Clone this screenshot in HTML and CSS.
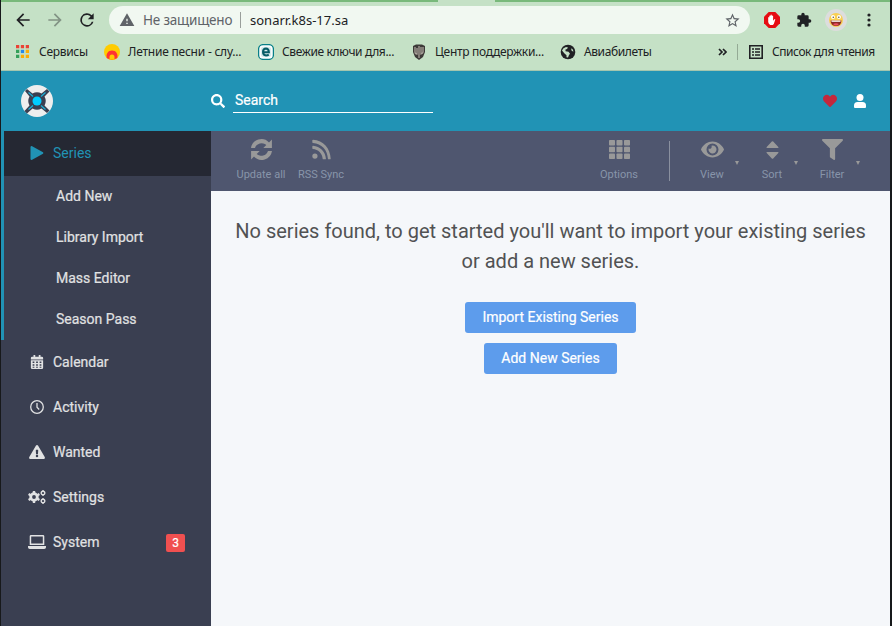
FILE: index.html
```html
<!DOCTYPE html>
<html lang="ru">
<head>
<meta charset="utf-8">
<title>Sonarr</title>
<link rel="stylesheet" href="styles.css">
</head>
<body>
<div class="window">
  <div class="tab-strip"><span class="active-tab"></span></div>
  <div class="browser-bar">
    <svg class="nav-icon" viewBox="0 0 24 24"><path d="M20 11H7.8l5.6-5.6L12 4l-8 8 8 8 1.4-1.4L7.8 13H20z"/></svg>
    <svg class="nav-icon forward" viewBox="0 0 24 24"><path d="M12 4l-1.4 1.4 5.6 5.6H4v2h12.2l-5.6 5.6L12 20l8-8z"/></svg>
    <svg class="nav-icon" viewBox="0 0 24 24"><path d="M17.65 6.35A8 8 0 1 0 19.73 14h-2.08A6 6 0 1 1 12 6c1.66 0 3.14.69 4.22 1.78L13 11h7V4z"/></svg>
    <div class="omnibox">
      <svg class="insecure" viewBox="0 0 24 24"><path d="M1 21h22L12 2zm12-3h-2v-2h2zm0-4h-2v-4h2z"/></svg>
      <span class="insecure-label">Не защищено</span>
      <span class="url-divider"></span>
      <span class="url">sonarr.k8s-17.sa</span>
      <svg class="star" viewBox="0 0 24 24"><path d="M22 9.24l-7.19-.62L12 2 9.19 8.63 2 9.24l5.46 4.73L5.82 21 12 17.27 18.18 21l-1.63-7.03zM12 15.4l-3.76 2.27 1-4.28-3.32-2.88 4.38-.38L12 6.1l1.71 4.04 4.38.38-3.32 2.88 1 4.28z"/></svg>
    </div>
    <svg class="adblock" viewBox="0 0 16 16"><path fill="#e60c12" d="M4.7 0h6.6L16 4.7v6.6L11.3 16H4.7L0 11.3V4.7z"/><path fill="#fff" d="M4.2 8.2V5.4q.6-.9 1.1 0V4q.6-.9 1.2 0V3q.7-.8 1.3 0v1q.7-.8 1.3 0v4.7l1.3-1.5q1-.3.9.4L9.8 11.9 8.8 13H6.2Q4.5 12 4.2 10z"/></svg>
    <svg class="puzzle" viewBox="0 0 24 24"><path d="M20.5 11H19V7a2 2 0 0 0-2-2h-4V3.500a2.500 2.500 0 0 0-5 0V5H4a2 2 0 0 0-2 2v3.800h1.500a2.700 2.700 0 0 1 0 5.400H2V20a2 2 0 0 0 2 2h3.800v-1.500a2.700 2.700 0 0 1 5.400 0V22H17a2 2 0 0 0 2-2v-4h1.500a2.500 2.500 0 0 0 0-5z"/></svg>
    <svg class="avatar" viewBox="0 0 22 22"><circle cx="11" cy="11" r="11" fill="#ddd"/><circle cx="11" cy="11" r="7" fill="#f9cf52"/><circle cx="8" cy="8" r="2" fill="#fff"/><circle cx="14" cy="8" r="2" fill="#fff"/><circle cx="8.300" cy="8.200" r=".8" fill="#654"/><circle cx="13.800" cy="8.200" r=".8" fill="#654"/><path fill="#8e2828" d="M5.500 11.500h11Q16 17 11 17t-5.500-5.500z"/><path fill="#fff" d="M6.500 11.500h9v1.300h-9z"/><path fill="#ed5262" d="M8 15q3-1.500 6 0-3 3-6 0z"/></svg>
    <svg class="dots" viewBox="0 0 4 14"><circle cx="2" cy="2" r="1.600"/><circle cx="2" cy="7" r="1.600"/><circle cx="2" cy="12" r="1.600"/></svg>
  </div>
  <div class="bookmarks">
    <svg class="bm-apps" viewBox="0 0 14 14"><path fill="#ea4335" d="M0 0h3.500v3.500H0zM5.200 0h3.500v3.500H5.200zM10.500 0H14v3.500h-3.500z"/><path fill="#34a05a" d="M0 5.200h3.500v3.500H0zM0 10.500h3.500V14H0z"/><path fill="#2488ee" d="M5.200 5.200h3.500v3.500H5.200z"/><path fill="#fbad08" d="M10.500 5.200H14v3.500h-3.500zM5.200 10.500h3.500V14H5.200zM10.500 10.500H14V14h-3.500z"/></svg>
    <span class="bm-text t-services">Сервисы</span>
    <svg class="bm-icon" viewBox="0 0 16 16"><circle cx="8" cy="8" r="8" fill="#fc0"/><path fill="#f33" d="M3 14.200a5.500 5.500 0 1 1 10 0L8 16z"/><path fill="#fc0" d="M5.500 15.700V13a2.500 2.500 0 0 1 5 0v2.700z"/></svg>
    <span class="bm-text t-songs">Летние песни - слу...</span>
    <svg class="bm-icon" viewBox="0 0 16 16"><rect x=".6" y=".6" width="14.800" height="14.800" rx="4.500" fill="#fff" stroke="#087f88" stroke-width="1.300"/><rect x="2.800" y="2.800" width="10.400" height="10.400" rx="3" fill="#d7ebed"/><path fill="none" stroke="#075c66" stroke-width="2" d="M5 8.200h5.900Q10.700 4.600 8 4.600 5 4.800 5 8t3 3.400q1.500 0 2.800-.8"/></svg>
    <span class="bm-text t-keys">Свежие ключи для...</span>
    <svg class="bm-icon" viewBox="0 0 16 16"><path fill="#3d3a38" d="M2 2l3-1.500h6L14 2v6l-2 5-4 3-4-3-2-5z"/><path fill="none" stroke="#aaa29b" stroke-width="1.300" d="M4 3v5q0 2 2 2V4m4-1v7q2.500-.8 2-3V3M8 2v12"/></svg>
    <span class="bm-text t-support">Центр поддержки...</span>
    <svg class="bm-icon" viewBox="0 0 16 16"><circle cx="8" cy="8" r="7.300" fill="#202124"/><path fill="#c5e1c6" d="M2 6.500q1-3 4-3.500l2 .5L7 5 5.500 5.500v1.800l3 .5 1.500 2-1 1.200-1 2.500-1.500-.3v-2L4.500 9.500zM11 4.500l1.500.5 1 2.500-1.700-.6z"/></svg>
    <span class="bm-text t-avia">Авиабилеты</span>
    <svg class="overflow" viewBox="0 0 9 8"><path fill="none" stroke="#202124" stroke-width="1.700" d="M1 1l3 3-3 3m4-6l3 3-3 3"/></svg>
    <span class="bm-divider"></span>
    <svg class="reading" viewBox="0 0 14 14"><path fill="none" stroke="#202124" stroke-width="1.600" d="M.8.8h12.400v12.400H.8zM3 4h2m1 0h5M3 7h2m1 0h5M3 10h2m1 0h5"/></svg>
    <span class="bm-text t-reading">Список для чтения</span>
  </div>
  <header class="app-header">
    <svg class="logo" viewBox="0 0 32 32"><circle cx="16" cy="16" r="16" fill="#eee"/><path fill="#3a3f51" d="M4 6l2-2 5.500 4.500Q16 6 20.500 8.500L26 4l2.500 2.500-5 5Q26 16 23.500 20.500l5 5L26 28l-5.500-4.500Q16 26 11.500 23.500L6 28.500 3.500 26l5-5.500Q6 16 8.500 11.500z"/><path stroke="#1bafd7" stroke-width="1.200" d="M7.500 7.500l4.500 4M24.500 7.500l-4.500 4M7.500 24.500l4.500-4M24.500 24.500l-4.500-4"/><circle cx="16" cy="16" r="4.500" fill="#0cf"/></svg>
    <svg class="search-icon" viewBox="0 0 512 512"><path d="M505 442.700L405.300 343c-4.500-4.500-10.600-7-17-7H372c27.600-35.300 44-79.700 44-128C416 93.100 322.900 0 208 0S0 93.100 0 208s93.100 208 208 208c48.300 0 92.700-16.400 128-44v16.300c0 6.400 2.500 12.500 7 17l99.700 99.700c9.400 9.400 24.600 9.400 33.900 0l28.300-28.300c9.400-9.400 9.400-24.600.1-34zM208 336a128 128 0 1 1 0-256 128 128 0 0 1 0 256z"/></svg>
    <input class="search" aria-label="Search" placeholder="Search">
    <svg class="heart" viewBox="0 0 512 512"><path d="M462 62c-55-46-136-38-186 14l-20 20-20-20C186 24 105 16 50 62c-63 54-66 150-10 208l193 200c13 13 33 13 46 0l193-200c56-58 53-154-10-208z"/></svg>
    <svg class="user" viewBox="0 0 12 14"><circle cx="6" cy="3.500" r="3.500"/><path d="M0 13v-1.500Q0 8 3.500 8h5Q12 8 12 11.500V13q0 1-1 1H1q-1 0-1-1z"/></svg>
  </header>
  <div class="app-body">
    <nav class="sidebar">
      <div class="active-group">
        <a class="nav-link current"><svg viewBox="0 0 14 14"><path d="M1.200 0Q0 0 0 1v12q0 1 1.200 1L12.500 7.800q.8-.8 0-1.600z" transform="translate(.5)"/></svg>Series</a>
        <a class="sub-link">Add New</a>
        <a class="sub-link">Library Import</a>
        <a class="sub-link">Mass Editor</a>
        <a class="sub-link">Season Pass</a>
      </div>
      <a class="nav-link"><svg viewBox="0 0 448 512"><path fill-rule="evenodd" d="M0 464a48 48 0 0 0 48 48h352a48 48 0 0 0 48-48V192H0zM64 240h64v56H64zm128 0h64v56h-64zm128 0h64v56h-64zM64 336h64v56H64zm128 0h64v56h-64zm128 0h64v56h-64zM64 430h64v34H64zm128 0h64v34h-64zm128 0h64v34h-64zM400 64h-48V0h-64v64H160V0H96v64H48a48 48 0 0 0-48 48v48h448v-48a48 48 0 0 0-48-48z"/></svg>Calendar</a>
      <a class="nav-link"><svg viewBox="0 0 14 14"><path fill="none" stroke="#e1e2e3" stroke-width="1.300" d="M7 .7a6.300 6.300 0 1 0 0 12.600A6.300 6.300 0 0 0 7 .7zM7 3v4.300L9.200 9.500"/></svg>Activity</a>
      <a class="nav-link"><svg viewBox="0 0 576 512"><path fill-rule="evenodd" d="M570 440c18 32-5 72-42 72H48c-37 0-60-40-42-72L246 24c19-32 65-32 84 0zM288 354a46 46 0 1 0 0 92 46 46 0 0 0 0-92zm-44-165l8 136q1 11 12 11h48q11 0 12-11l8-136q0-13-12-13h-64q-12 0-12 13z"/></svg>Wanted</a>
      <a class="nav-link"><svg viewBox="0 0 18 14"><path fill="none" stroke="#e1e2e3" stroke-width="2.800" d="M6 3.700a3.300 3.300 0 1 0 0 6.600 3.300 3.300 0 0 0 0-6.600z"/><path d="M4.800 1h2.400v2H4.800zm0 10h2.400v2H4.800zM0 5l1.200-2 2 1.300L2 6.200zM10 7.800l2 1.200-1.200 2-2-1.300zM10.800 3L12 5l-2 1.200-1.200-2zM2 7.800l1.200 2-2 1.200L0 9z"/><path fill="none" stroke="#e1e2e3" stroke-width="1.400" d="M15 1.200a1.800 1.800 0 1 0 0 3.600 1.800 1.800 0 0 0 0-3.600zm0 8a1.800 1.800 0 1 0 0 3.600 1.800 1.800 0 0 0 0-3.600z"/><path d="M14.400 0h1.200v1h-1.200zm0 5h1.200v1h-1.200zm0 3h1.200v1h-1.200zm0 5h1.200v1h-1.200z"/></svg>Settings</a>
      <a class="nav-link"><svg viewBox="0 0 18 14"><path fill-rule="evenodd" d="M3 0h12q1.300 0 1.300 1.300V10H1.700V1.300Q1.700 0 3 0zm.2 1.600v6.900h11.600V1.600zM0 11h18v1.200q0 1.800-1.800 1.800H1.800Q0 14 0 12.200z"/></svg>System<span class="badge">3</span></a>
    </nav>
    <main class="content">
      <div class="toolbar">
        <div class="tool update"><svg viewBox="0 0 21 21"><path d="M0 9A10.500 10.500 0 0 1 18 3.400L20.900.5V9h-8.600l3-3A7 7 0 0 0 4 9zM21 12A10.500 10.500 0 0 1 3 17.600L.1 20.500V12h8.600l-3 3A7 7 0 0 0 17 12z"/></svg><span>Update all</span></div>
        <div class="tool rss"><svg viewBox="0 0 448 512"><path d="M128 416a64 64 0 1 1-128 0 64 64 0 0 1 128 0zM0 180v48c0 9 7 16 15 16 127 8 229 110 237 237 0 8 7 15 16 15h48c9 0 17-8 16-17C323 311 185 173 17 164c-9-1-17 7-17 16zm0-148v48c0 9 7 16 15 16 209 8 357 176 365 385 0 8 7 15 16 15h36c9 0 16-8 16-17C439 229 267 25 17 16 8 16 0 23 0 32z"/></svg><span>RSS Sync</span></div>
        <div class="tool options"><svg viewBox="0 0 21 19"><g><rect width="6" height="5.500" rx=".8"/><rect x="7.500" width="6" height="5.500" rx=".8"/><rect x="15" width="6" height="5.500" rx=".8"/><rect y="6.800" width="6" height="5.500" rx=".8"/><rect x="7.500" y="6.800" width="6" height="5.500" rx=".8"/><rect x="15" y="6.800" width="6" height="5.500" rx=".8"/><rect y="13.500" width="6" height="5.500" rx=".8"/><rect x="7.500" y="13.500" width="6" height="5.500" rx=".8"/><rect x="15" y="13.500" width="6" height="5.500" rx=".8"/></g></svg><span>Options</span></div>
        <div class="separator"></div>
        <div class="tool view"><svg viewBox="0 0 576 400"><path fill-rule="evenodd" d="M572 185C518 79 410 0 288 0S58 79 4 185q-6 15 0 30c54 106 162 185 284 185s230-79 284-185q6-15 0-30zM288 350a150 150 0 1 1 0-300 150 150 0 0 1 0 300z"/><path d="M288 100q-14 0-27 4a50 50 0 0 1-69 69 100 100 0 1 0 96-73z"/></svg><span>View</span><i></i></div>
        <div class="tool sort"><svg viewBox="0 0 12 18"><path d="M.5 7Q-.5 7 .2 6.100L5.300.6Q6 0 6.700.6l5.100 5.500q.7.900-.3.900zM.5 11q-1 0-.3.900l5.100 5.500q.7.600 1.400 0l5.100-5.500q.7-.9-.3-.9z"/></svg><span>Sort</span><i></i></div>
        <div class="tool filter"><svg viewBox="0 0 512 512"><path d="M488 0H24C3 0-8 26 7 41l185 185v206q0 12 10 20l80 56c16 11 38 0 38-20V226L505 41c15-15 4-41-17-41z"/></svg><span>Filter</span><i></i></div>
      </div>
      <div class="empty">
        <p>No series found, to get started you'll want to import your existing series or add a new series.</p>
        <button>Import Existing Series</button>
        <button>Add New Series</button>
      </div>
    </main>
  </div>
</div>
</body>
</html>
```
FILE: styles.css
```css
* { box-sizing: border-box; }
body { margin: 0; background: #17191b; font-family: Roboto, sans-serif; font-size: 14px; }
svg { display: block; flex: none; }
.window { width: 889px; height: 626px; margin-left: 1px; overflow: hidden; display: flex; flex-direction: column; background: #c5e1c6; }
.tab-strip { height: 2px; flex: none; background: #79b97b; padding-left: 437px; }
.active-tab { display: block; width: 57px; height: 2px; background: #c5e1c6; }
.browser-bar { height: 36px; flex: none; display: flex; align-items: center; padding: 0 18px 0 12px; fill: #202124; font-family: "Noto Sans", sans-serif; }
.nav-icon { width: 20px; height: 20px; margin-right: 12px; }
.forward { opacity: .4; }
.omnibox { width: 641px; height: 28px; border-radius: 14px; background: #f1f8f1; display: flex; align-items: center; padding: 0 9px 0 10px; font-size: 13px; color: #202124; }
.insecure { width: 16px; height: 16px; fill: #5f6368; }
.insecure-label { width: 90px; margin-left: 8px; color: #5f6368; white-space: nowrap; font-size: 13.5px; letter-spacing: -.2px; }
.url-divider { width: 1px; height: 16px; margin: 0 9px 0 7px; background: #999e9b; }
.star { width: 17px; height: 17px; margin-left: auto; fill: #5f6368; }
.adblock { width: 16px; height: 16px; margin-left: 14px; }
.puzzle { width: 16px; height: 16px; margin-left: 16px; }
.avatar { width: 22px; height: 22px; margin-left: 13px; }
.dots { width: 4px; height: 14px; margin-left: 20px; }
.bookmarks { height: 33px; flex: none; display: flex; align-items: center; padding: 0 0 5px 15px; border-bottom: 1px solid #a4c5ae; font: 12px "Noto Sans", sans-serif; letter-spacing: -.3px; color: #202124; }
.bm-apps { width: 13px; height: 13px; }
.bm-text { white-space: nowrap; margin-left: 8px; }
.bm-icon { width: 16px; height: 16px; }
.t-services { width: 65px; margin-left: 10px; }
.t-songs { width: 130px; letter-spacing: -.22px; }
.t-keys { width: 129px; letter-spacing: -.36px; }
.t-support { width: 125px; }
.t-avia { width: 134px; letter-spacing: -.4px; }
.overflow { width: 9px; height: 8px; }
.bm-divider { width: 1px; height: 16px; margin: 0 11px 0 10px; background: #94aa95; }
.reading { width: 14px; height: 14px; }
.t-reading { margin-left: 9px; letter-spacing: -.45px; }
.app-header { height: 60px; flex: none; display: flex; align-items: center; padding: 0 24px 0 20px; background: #2193b5; fill: #fff; }
.logo { width: 32px; height: 32px; }
.search-icon { width: 14px; height: 14px; margin-left: 158px; }
.search { width: 200px; height: 24px; margin-left: 8px; padding: 0 0 2px 2px; border: 0; border-bottom: 1px solid #fff; background: none; outline: 0; font: 14px Roboto, sans-serif; color: #fff; -webkit-text-stroke: .2px; }
.search::placeholder { color: #fff; opacity: 1; }
.heart { width: 14px; height: 14px; margin-left: auto; fill: #c4273c; }
.user { width: 12px; height: 14px; margin-left: 17px; }
.app-body { flex: 1; display: flex; min-height: 0; }
.sidebar { width: 210px; background: #3a3f51; color: #e1e2e3; fill: #e1e2e3; -webkit-text-stroke: .2px; }
.active-group { border-left: 3px solid #2193b5; height: 209px; }
.nav-link { height: 45px; display: flex; align-items: center; padding: 0 0 2px 27px; }
.nav-link svg { width: 18px; height: 14px; margin-right: 7px; }
.active-group .nav-link { padding-left: 24px; }
.current { background: #252833; color: #2193b5; fill: #2193b5; -webkit-text-stroke: 0; }
.sub-link { display: flex; height: 41px; align-items: center; padding: 0 0 2px 52px; }
.badge { position: relative; top: 1px; margin-left: auto; margin-right: 26px; width: 19px; height: 18px; background: #f05050; color: #fff; border-radius: 2px; font-size: 12px; line-height: 18px; text-align: center; }
.content { flex: 1; background: #f5f7fa; }
.toolbar { height: 60px; padding: 0 28px 0 20px; background: #4f566f; display: flex; fill: #999; color: #8895aa; font-size: 11px; }
.tool { position: relative; width: 60px; padding-top: 8px; display: flex; flex-direction: column; align-items: center; }
.tool svg { width: 21px; height: 21px; margin-bottom: 8px; }
.tool span { line-height: 13px; white-space: nowrap; }
.options { margin-left: auto; }
.separator { width: 1px; height: 40px; margin: 10px 12px 0 20px; background: #8a909f; }
.tool.view svg { width: 23px; }
.sort svg { height: 18px; margin: 2px 0 9px; }
.tool i { position: absolute; left: 53px; top: 30px; border: solid transparent; border-width: 4px 2.5px 0; border-top-color: #999; }
.tool.sort i { left: 52px; }
.tool.filter i { left: 54px; }
.empty { padding: 25px 20px 0; display: flex; flex-direction: column; align-items: center; color: #515253; }
.empty p { margin: 0 0 26px; font-size: 20px; line-height: 30px; text-align: center; }
button { height: 31px; margin-bottom: 10px; padding: 0 17px 2px; border: 0; border-radius: 3px; background: #5d9cec; color: #fff; font: 14px Roboto, sans-serif; -webkit-text-stroke: .2px; }
```
